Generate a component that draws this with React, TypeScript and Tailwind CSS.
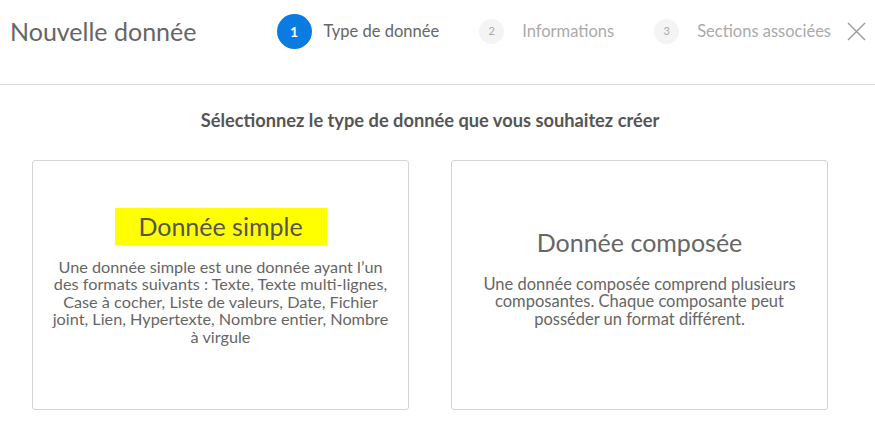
import React from 'react'

const steps = [
  { n: 1, label: 'Type de donnée', active: true },
  { n: 2, label: 'Informations', active: false },
  { n: 3, label: 'Sections associées', active: false },
]

const App: React.FC = () => {
  return (
    <div className="min-h-screen w-[875px] h-[422px] overflow-hidden bg-white font-['Lato','Noto_Sans',sans-serif]">
      {/* Header */}
      <div className="flex h-[85px] items-start border-b border-[#dcdcdc]">
        <h1 className="pl-[10px] pt-[14px] text-[25px] leading-[34px] text-[#666]">Nouvelle donnée</h1>
        <div className="ml-auto flex items-center pt-[14px]">
          {steps.map((s, i) =>
            s.active ? (
              <div key={s.n} className="mr-[40px] flex items-center">
                <span className="flex h-[35px] w-[35px] items-center justify-center rounded-full bg-[#0a7be0] text-[14px] font-bold text-white">
                  {s.n}
                </span>
                <span className="ml-[12px] text-[16.5px] text-[#666]">{s.label}</span>
              </div>
            ) : (
              <div key={s.n} className={i === steps.length - 1 ? 'mr-[16px] flex items-center' : 'mr-[40px] flex items-center'}>
                <span className="flex h-[25px] w-[25px] items-center justify-center rounded-full bg-[#f4f4f4] text-[11px] text-[#aaa]">
                  {s.n}
                </span>
                <span className="ml-[18px] text-[16.5px] text-[#aaa]">{s.label}</span>
              </div>
            )
          )}
          <button className="mr-[9px] flex h-[19px] w-[19px] items-center justify-center text-[#999]">
            <svg width="19" height="19" viewBox="0 0 19 19" fill="none" stroke="currentColor" strokeWidth="1.4">
              <path d="M1 1L18 18M18 1L1 18" />
            </svg>
          </button>
        </div>
      </div>

      {/* Main content */}
      <div className="w-[860px] px-[32px]">
        <p className="pt-[22px] text-center text-[18.25px] leading-[26px] font-bold text-[#555]">
          Sélectionnez le type de donnée que vous souhaitez créer
        </p>
        <div className="mt-[27px] grid grid-cols-2 gap-[42px]">
          <div className="flex h-[250px] flex-col items-center justify-center rounded-[3px] border border-[#d4d4d4] px-[12px] pb-[17px] text-center">
            <div className="flex h-[37px] w-[212px] items-center justify-center bg-[#ffff00] text-[25px] text-[#555]">
              Donnée simple
            </div>
            <p className="mt-[13px] whitespace-nowrap text-[16.25px] leading-[17.5px] text-[#666]">
              Une donnée simple est une donnée ayant l’un
              <br />
              des formats suivants : Texte, Texte multi-lignes,
              <br />
              Case à cocher, Liste de valeurs, Date, Fichier
              <br />
              joint, Lien, Hypertexte, Nombre entier, Nombre
              <br />à virgule
            </p>
          </div>
          <div className="flex h-[250px] flex-col items-center justify-center rounded-[3px] border border-[#d4d4d4] px-[20px] pb-[17px] text-center">
            <div className="text-[25px] leading-[34px] text-[#666]">Donnée composée</div>
            <p className="mt-[17px] whitespace-nowrap text-[16.5px] leading-[17.5px] text-[#666]">
              Une donnée composée comprend plusieurs
              <br />
              composantes. Chaque composante peut
              <br />
              posséder un format différent.
            </p>
          </div>
        </div>
      </div>
    </div>
  )
}

export default App
